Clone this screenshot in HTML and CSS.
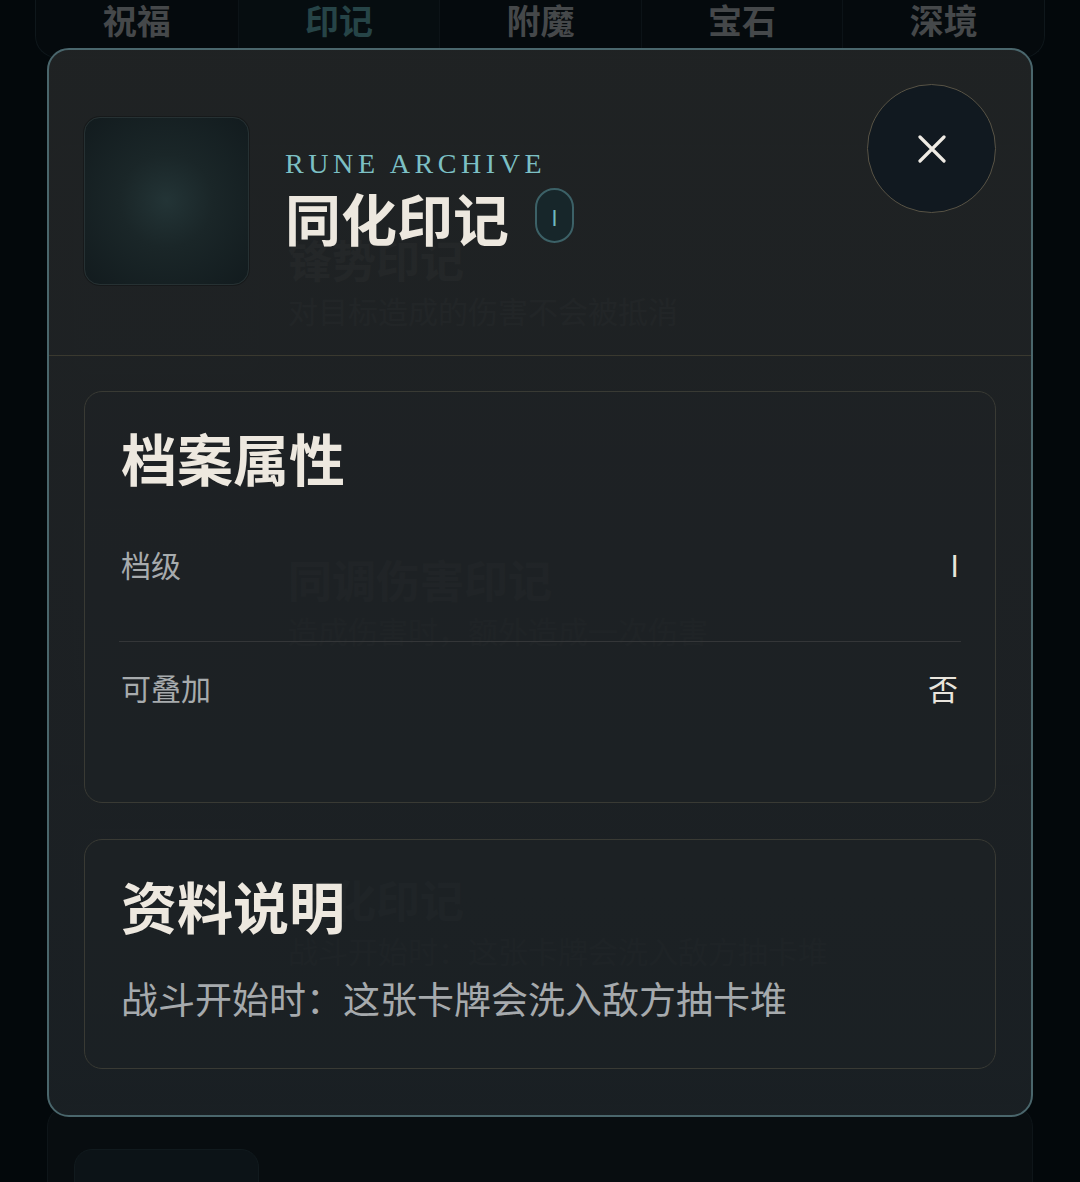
FILE: index.html
```html
<!DOCTYPE html>
<html lang="zh-CN">
<head>
<meta charset="utf-8">
<title>印记档案</title>
<link rel="stylesheet" href="styles.css">
</head>
<body>
<div class="page">
  <nav class="tabs">
    <div class="tab">祝福</div>
    <div class="tab active">印记</div>
    <div class="tab">附魔</div>
    <div class="tab">宝石</div>
    <div class="tab">深境</div>
  </nav>
  <div class="list">
    <div class="item">
      <div class="item-icon"></div>
      <div class="item-text">
        <div class="item-title">锋势印记</div>
        <div class="item-desc">对目标造成的伤害不会被抵消</div>
      </div>
    </div>
    <div class="item">
      <div class="item-icon"></div>
      <div class="item-text">
        <div class="item-title">同调伤害印记</div>
        <div class="item-desc">造成伤害时，额外造成一次伤害</div>
      </div>
    </div>
    <div class="item">
      <div class="item-icon"></div>
      <div class="item-text">
        <div class="item-title">同化印记</div>
        <div class="item-desc">战斗开始时：这张卡牌会洗入敌方抽卡堆</div>
      </div>
    </div>
    <div class="item">
      <div class="item-icon"></div>
      <div class="item-text">
        <div class="item-title">守护印记</div>
        <div class="item-desc">回合结束时获得护盾</div>
      </div>
    </div>
  </div>
</div>

<section class="modal">
  <header class="modal-head">
    <div class="rune-icon"></div>
    <div class="head-text">
      <div class="eyebrow">RUNE ARCHIVE</div>
      <div class="title-row">
        <h1 class="title">同化印记</h1>
        <span class="badge">I</span>
      </div>
    </div>
    <button class="close" aria-label="关闭">
      <svg width="28" height="28" viewBox="0 0 28 28" fill="none">
        <path d="M2 2L26 26M26 2L2 26" stroke="#efebe4" stroke-width="3.2" stroke-linecap="round"/>
      </svg>
    </button>
  </header>
  <div class="modal-body">
    <div class="card">
      <h2 class="card-title">档案属性</h2>
      <div class="row first">
        <span class="label">档级</span>
        <span class="value">I</span>
      </div>
      <div class="row">
        <span class="label">可叠加</span>
        <span class="value">否</span>
      </div>
    </div>
    <div class="card card-desc">
      <h2 class="card-title">资料说明</h2>
      <p class="desc">战斗开始时：这张卡牌会洗入敌方抽卡堆</p>
    </div>
  </div>
</section>
</body>
</html>
```

FILE: styles.css
```css
* { box-sizing: border-box; }

html, body {
  margin: 0;
  padding: 0;
  background: #03080b;
  width: 1080px;
  height: 1182px;
  overflow: hidden;
  font-family: "Noto Sans CJK SC", "Noto Sans", sans-serif;
}

.page {
  padding: 0 35px;
}

.tabs {
  margin-top: -22px;
  height: 80px;
  display: grid;
  grid-template-columns: repeat(5, 1fr);
  border: 1px solid #0f171b;
  border-top: none;
  border-radius: 0 0 22px 22px;
  background: #050a0d;
  overflow: hidden;
}

.tab {
  display: flex;
  align-items: center;
  justify-content: center;
  font-size: 34px;
  font-weight: 700;
  color: #45484a;
  border-left: 1px solid #0c1317;
  padding-top: 4px;
}
.tab:first-child { border-left: none; }
.tab.active { color: #264447; background: #060d10; }

.list {
  display: flex;
  flex-direction: column;
  gap: 20px;
  padding: 87px 12px 0;
}

.item {
  height: 300px;
  flex: none;
  display: flex;
  gap: 29px;
  padding: 43px 26px;
  background: #080d10;
  border: 1px solid #0e1519;
  border-radius: 22px;
}

.item-icon {
  width: 185px;
  height: 185px;
  flex: none;
  border-radius: 18px;
  background: #0c1317;
  border: 1px solid #111a1e;
}

.item-text { padding-top: 44px; }

.item-title {
  font-size: 44px;
  font-weight: 700;
  color: #cbc6bc;
  line-height: 1.2;
}

.item-desc {
  margin-top: 2px;
  font-size: 30px;
  color: #8d9194;
}

.modal {
  position: absolute;
  left: 47px;
  top: 48px;
  width: 986px;
  height: 1069px;
  border: 2px solid #4a666c;
  border-radius: 22px;
  background: linear-gradient(180deg, rgba(32, 35, 36, 0.972) 0%, rgba(29, 33, 36, 0.972) 60%, rgba(26, 32, 36, 0.972) 100%);
  overflow: hidden;
}

.modal-head {
  position: relative;
  height: 306px;
  display: flex;
  align-items: center;
  gap: 36px;
  padding: 0 35px 3px;
  border-bottom: 1.5px solid #3a392f;
}

.rune-icon {
  width: 165px;
  height: 168px;
  flex: none;
  border-radius: 16px;
  border: 1px solid #263133;
  background: radial-gradient(circle at 50% 50%, #233436 0%, #1a2628 40%, #121b1e 100%);
  box-shadow: 0 0 0 1px rgba(0,0,0,0.25);
}

.head-text {
  display: flex;
  flex-direction: column;
  margin-top: -4px;
}

.eyebrow {
  font-family: "Liberation Serif", "DejaVu Serif", serif;
  font-size: 28px;
  letter-spacing: 4.6px;
  color: #7cc0c5;
  line-height: 34px;
}

.title-row {
  display: flex;
  align-items: center;
  gap: 26px;
  margin-top: 1px;
}

.title {
  margin: 0;
  font-size: 56px;
  font-weight: 700;
  color: #ede8df;
  line-height: 70px;
}

.badge {
  width: 39px;
  height: 55px;
  border-radius: 20px;
  border: 2px solid #3c6167;
  background: #17262a;
  color: #6fb9bf;
  font-size: 22px;
  display: flex;
  align-items: center;
  justify-content: center;
  margin-top: -2px;
}

.close {
  position: absolute;
  top: 34px;
  right: 35px;
  width: 129px;
  height: 129px;
  border-radius: 50%;
  border: 1.5px solid #585345;
  background: #111920;
  display: flex;
  align-items: center;
  justify-content: center;
  padding: 0;
}

.modal-body {
  display: flex;
  flex-direction: column;
  gap: 36px;
  padding: 35px 35px;
}

.card {
  border: 1.5px solid #393a34;
  border-radius: 18px;
  background: rgba(30, 34, 38, 0.4);
  padding: 31px 35px 60px 36px;
  height: 412px;
}

.card-title {
  margin: 0;
  font-size: 56px;
  font-weight: 700;
  color: #ede8df;
  line-height: 67px;
}

.row {
  display: flex;
  justify-content: space-between;
  align-items: center;
  padding: 23px 0;
  font-size: 30px;
  line-height: 44px;
}
.row.first {
  margin-top: 29px;
  padding-bottom: 55px;
  border-bottom: 1px solid #343638;
  margin-right: -1px;
  margin-left: -2px;
  padding-left: 2px;
}

.label { color: #a7abad; }
.value { color: #e9e5dd; padding-right: 2px; }

.card-desc {
  height: 230px;
  padding-bottom: 40px;
}

.desc {
  margin: 33px 0 0;
  font-size: 37px;
  line-height: 54px;
  color: #a6aaad;
}
```
